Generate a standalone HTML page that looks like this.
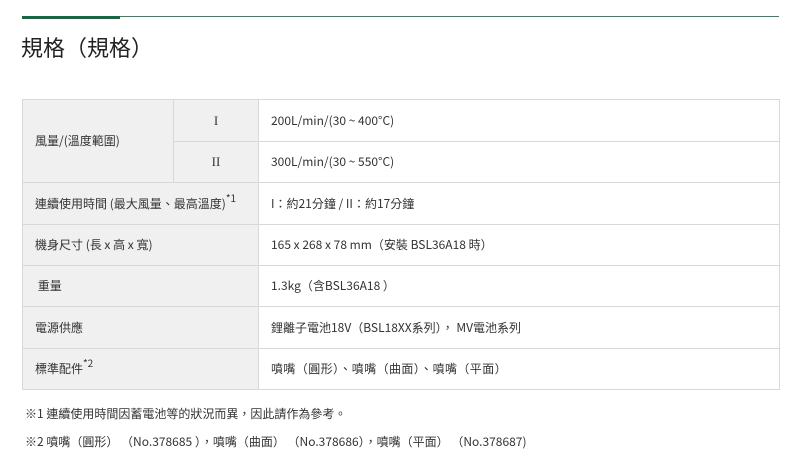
<!DOCTYPE html>
<html><head><meta charset="utf-8"><style>
body{margin:0;background:#fff;font-family:"Noto Sans CJK TC","Liberation Sans",sans-serif;color:#333;width:800px;height:459px;overflow:hidden;position:relative}
.ln{position:absolute;left:22px;top:16px;width:757px;height:1px;background:#2e8a5e}
.lt{position:absolute;left:22px;top:16px;width:98px;height:3px;background:#0f6b41}
h1{position:absolute;left:21px;top:30px;margin:0;font-size:22px;font-weight:normal;line-height:34px;color:#222}
table{position:absolute;left:22px;top:99px;width:758px;border-collapse:collapse;font-size:12px}
td{border:1px solid #d8d8d8;height:40px;padding:0 0 0 12px;box-sizing:border-box;line-height:16px}
td.g{background:#f0f0f0}
td.c{text-align:center;padding:0;font-family:"Liberation Serif",serif;font-size:13px}
sup{font-size:10px;vertical-align:6px;line-height:0}
.f{position:absolute;left:25px;font-size:12px;color:#333;line-height:16px;white-space:pre}
</style></head><body>
<div class="ln"></div><div class="lt"></div>
<h1>規格（規格）</h1>
<table>
<colgroup><col style="width:151px"><col style="width:85px"><col></colgroup>
<tr style="height:42px"><td class="g" rowspan="2">風量/(溫度範圍)</td><td class="g c">I</td><td>200L/min/(30 ~ 400°C)</td></tr>
<tr style="height:41px"><td class="g c">II</td><td>300L/min/(30 ~ 550°C)</td></tr>
<tr style="height:42px"><td class="g" colspan="2">連續使用時間 (最大風量、最高溫度)<sup>*1</sup></td><td>I：約21分鐘 / II：約17分鐘</td></tr>
<tr style="height:41px"><td class="g" colspan="2">機身尺寸 (長 x 高 x 寬)</td><td>165 x 268 x 78 mm（安裝 BSL36A18 時）</td></tr>
<tr style="height:41px"><td class="g" colspan="2">&nbsp;重量</td><td>1.3kg（含BSL36A18 ）</td></tr>
<tr style="height:42px"><td class="g" colspan="2">電源供應</td><td>鋰離子電池18V（BSL18XX系列）， MV電池系列</td></tr>
<tr style="height:41px"><td class="g" colspan="2">標準配件<sup>*2</sup></td><td style="letter-spacing:0.4px">噴嘴（圓形）、噴嘴（曲面）、噴嘴（平面）</td></tr>
</table>
<div class="f" style="top:406px">※1 連續使用時間因蓄電池等的狀況而異，因此請作為參考。</div>
<div class="f" style="top:434px">※2 噴嘴（圓形） （No.378685 ），噴嘴（曲面） （No.378686），噴嘴（平面） （No.378687)</div>
</body></html>
